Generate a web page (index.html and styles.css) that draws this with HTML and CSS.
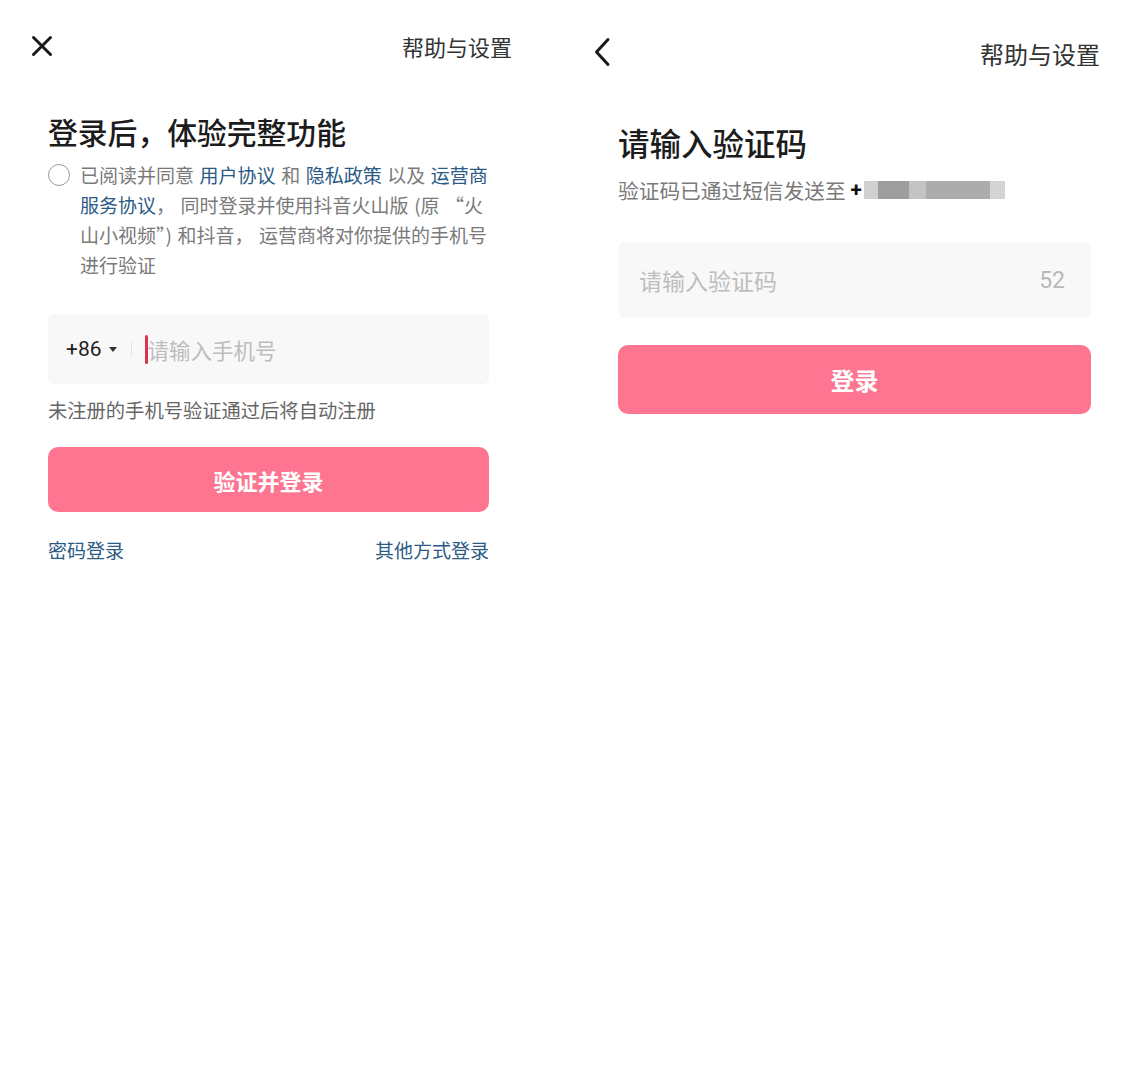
FILE: index.html
```html
<!DOCTYPE html>
<html lang="zh-CN">
<head>
<meta charset="utf-8">
<title>登录</title>
<link rel="stylesheet" href="styles.css">
</head>
<body>
<div class="page">
  <section class="panel panel-left">
    <header class="topbar topbar-left">
      <svg class="icon-close" width="22" height="22" viewBox="0 0 22 22"><path d="M2.5 2.5 L19.5 19.5 M19.5 2.5 L2.5 19.5" stroke="#1a1a1a" stroke-width="3" stroke-linecap="round" fill="none"/></svg>
      <span class="help help-left">帮助与设置</span>
    </header>
    <h1 class="title title-left">登录后，体验完整功能</h1>
    <div class="agree">
      <span class="radio"></span>
      <p class="agree-text">已阅读并同意 <a class="link">用户协议</a> 和 <a class="link">隐私政策</a> 以及 <a class="link">运营商</a><br><a class="link">服务协议</a>， 同时登录并使用抖音火山版 (原 “火<br>山小视频”) 和抖音， 运营商将对你提供的手机号<br>进行验证</p>
    </div>
    <div class="field field-left">
      <span class="code">+86</span>
      <span class="caret"></span>
      <span class="divider"></span>
      <span class="cursor"></span>
      <span class="placeholder ph-left">请输入手机号</span>
    </div>
    <p class="hint">未注册的手机号验证通过后将自动注册</p>
    <button class="btn btn-left">验证并登录</button>
    <div class="links">
      <a class="link link-lg">密码登录</a>
      <a class="link link-lg">其他方式登录</a>
    </div>
  </section>
  <section class="panel panel-right">
    <header class="topbar topbar-right">
      <svg class="icon-back" width="20" height="30" viewBox="0 0 20 30"><path d="M15 2.5 L3.5 15 L15 27.5" stroke="#1a1a1a" stroke-width="3" stroke-linecap="round" stroke-linejoin="round" fill="none"/></svg>
      <span class="help help-right">帮助与设置</span>
    </header>
    <h1 class="title title-right">请输入验证码</h1>
    <p class="sub">验证码已通过短信发送至 <b class="plus">+</b><span class="masked"></span></p>
    <div class="field field-right">
      <span class="placeholder ph-right">请输入验证码</span>
      <span class="count">52</span>
    </div>
    <button class="btn btn-right">登录</button>
  </section>
</div>
</body>
</html>
```

FILE: styles.css
```css
* { box-sizing: border-box; }
html, body { margin: 0; padding: 0; background: #fff; }
body {
  width: 1142px;
  height: 1088px;
  font-family: "Noto Sans CJK SC", "Noto Sans", sans-serif;
  color: #1f1f1f;
}
.page { display: flex; }
.panel { display: flex; flex-direction: column; }
.panel-left { width: 570px; padding: 26px 81px 0 48px; }
.panel-right { width: 572px; padding: 38px 51px 0 48px; }

.topbar { display: flex; justify-content: space-between; align-items: center; }
.topbar-left { height: 40px; margin: 0 -23px 0 -17px; }
.topbar-right { height: 28px; margin: 0 -9px 0 -25px; }
.icon-close { display: block; }
.icon-back { display: block; margin-top: -1px; }
.help { color: #333; line-height: 1; }
.help-left { font-size: 22px; margin-top: 0; }
.help-right { font-size: 24px; margin-top: 3px; }

.title { margin: 0; font-weight: 500; color: #1c1c1c; }
.title-left { font-size: 29.8px; line-height: 40px; margin-top: 45px; }
.title-right { font-size: 31.5px; line-height: 44px; margin-top: 54px; }

.agree { display: flex; gap: 10px; margin-top: 9px; }
.radio {
  flex: none;
  width: 22px; height: 22px;
  margin-top: 4px;
  border: 1.6px solid #9a9a9a;
  border-radius: 50%;
}
.agree-text { margin: 0; font-size: 19px; line-height: 30px; color: #7a7a7a; white-space: nowrap; word-spacing: 1.3px; }
.link { color: #2b5a85; text-decoration: none; }

.field {
  display: flex; align-items: center;
  background: #f8f8f8;
  border-radius: 6px;
}
.field-left { height: 70px; margin-top: 34px; padding-left: 18px; }
.code { font-family: "Roboto", "Noto Sans", sans-serif; font-size: 21px; color: #1f1f1f; }
.caret {
  width: 0; height: 0;
  margin-left: 7px;
  border-left: 4.5px solid transparent;
  border-right: 4.5px solid transparent;
  border-top: 5px solid #333;
}
.divider { width: 1px; height: 14px; background: #e2e2e2; margin-left: 14px; }
.cursor { width: 3px; height: 29px; background: #d8344f; margin-left: 13px; border-radius: 1.5px; }
.placeholder { color: #bdbdbd; }
.ph-left { font-size: 21.5px; margin-left: 0; }

.hint { margin: 13px 0 0; font-size: 19.3px; line-height: 26px; color: #666; }

.btn {
  display: block; width: 100%;
  border: 0; border-radius: 10px;
  background: #fd7590;
  color: #fff;
  font-family: "Noto Sans CJK SC", sans-serif;
  font-weight: 700;
  padding: 0;
}
.btn-left { height: 65px; margin-top: 24px; font-size: 22px; }
.btn-right { height: 69px; margin-top: 27px; font-size: 24px; }

.links { display: flex; justify-content: space-between; margin-top: 25px; line-height: 26px; }
.link-lg { font-size: 19px; }

.sub { margin: 12px 0 0; font-size: 20.7px; line-height: 28px; color: #7a7a7a; display: flex; align-items: center; }
.plus { color: #111; font-weight: 700; margin-left: 5px; font-family: "Roboto", sans-serif; }
.masked {
  display: inline-block;
  width: 141px; height: 18px;
  margin-left: 2px;
  background: linear-gradient(90deg,
    #d0d0d0 0 14px, #9e9e9e 14px 45px, #c3c3c3 45px 62px,
    #acacac 62px 126px, #d4d4d4 126px 141px);
  filter: blur(0.6px);
}
.field-right { height: 76px; margin-top: 38px; padding: 0 26px 0 21px; justify-content: space-between; }
.ph-right { font-size: 23px; }
.count { font-family: "Roboto", sans-serif; font-size: 23px; color: #b8b8b8; }
```
